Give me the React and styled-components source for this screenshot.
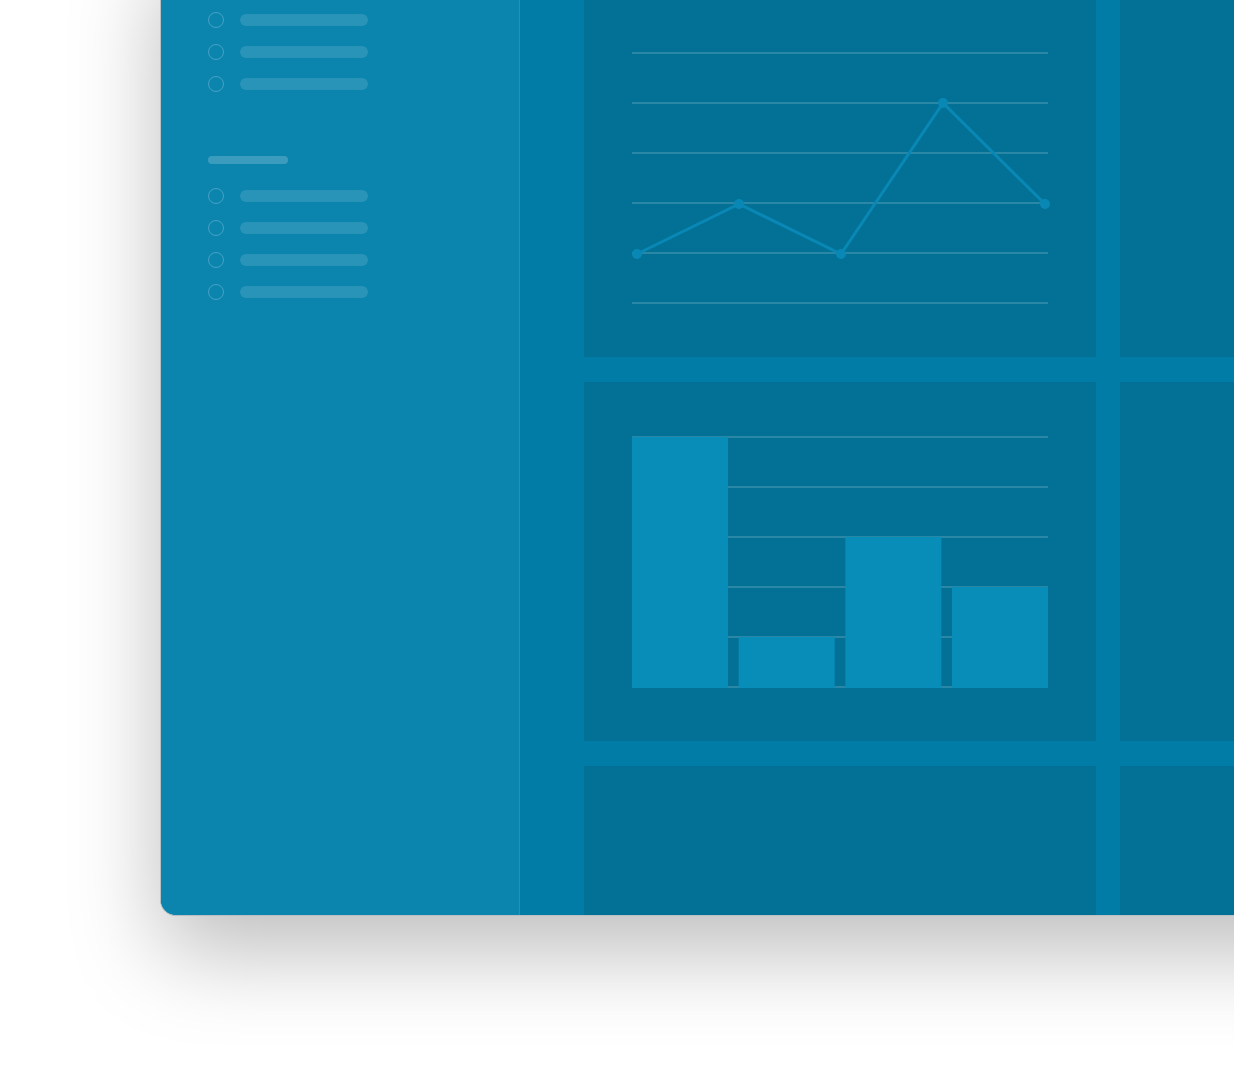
import styled, { createGlobalStyle } from "styled-components";

const GlobalStyle = createGlobalStyle`
  html, body {
    margin: 0;
    padding: 0;
    background: #ffffff;
    overflow: hidden;
    height: 1076px;
    font-family: "Liberation Sans", Arial, sans-serif;
  }
`;

const groups = [3, 4];

const linePoints = [
  [5, 202],
  [107, 152],
  [209, 202],
  [311, 51],
  [413, 152],
];

const bars = [250, 50, 150, 100];

const App = () => {
  return (
    <>
      <GlobalStyle />
      <Stage>
        <Window>
          <Sidebar>
            {groups.map((count, gi) => (
              <Group key={gi}>
                <GroupTitle />
                <ItemList>
                  {Array.from({ length: count }).map((_, i) => (
                    <Item key={i}>
                      <Radio />
                      <ItemLabel />
                    </Item>
                  ))}
                </ItemList>
              </Group>
            ))}
          </Sidebar>
          <Main>
            <PanelGrid>
              <Panel>
                <LineChart />
              </Panel>
              <Panel />
              <Panel>
                <BarChart />
              </Panel>
              <Panel />
              <Panel />
              <Panel />
            </PanelGrid>
          </Main>
        </Window>
      </Stage>
    </>
  );
};

const Grid = () =>
  [0, 1, 2, 3, 4, 5].map((i) => (
    <line
      key={i}
      x1="0"
      x2="416"
      y1={1 + i * 50}
      y2={1 + i * 50}
      stroke="rgba(255,255,255,0.16)"
      strokeWidth="2"
    />
  ));

const LineChart = () => (
  <ChartSvg width="416" height="254" viewBox="0 0 416 254">
    <Grid />
    <polyline
      points={linePoints.map((p) => p.join(",")).join(" ")}
      fill="none"
      stroke="#0a88b5"
      strokeWidth="3"
      strokeLinejoin="round"
    />
    {linePoints.map(([x, y], i) => (
      <circle key={i} cx={x} cy={y} r="5" fill="#0a88b5" />
    ))}
  </ChartSvg>
);

const BarChart = () => (
  <ChartSvg width="416" height="254" viewBox="0 0 416 254">
    <Grid />
    {bars.map((h, i) => (
      <rect
        key={i}
        x={i * (96 + 32 / 3)}
        y={251 - h}
        width="96"
        height={h + 1}
        fill="#088db9"
      />
    ))}
  </ChartSvg>
);

export default App;

const Stage = styled.div`
  padding-left: 160px;
  margin-top: -62px;
`;

const Window = styled.div`
  display: flex;
  width: 1500px;
  height: 977px;
  border: 1px solid #b8c0c4;
  border-top: none;
  border-right: none;
  border-radius: 0 0 0 16px;
  overflow: hidden;
  box-shadow: 0 36px 90px rgba(0, 0, 0, 0.26);
  background: #007ca7;
`;

const Sidebar = styled.aside`
  flex: 0 0 359px;
  box-sizing: border-box;
  padding: 42px 0 0 47px;
  background: #0b84ae;
  border-right: 1px solid rgba(255, 255, 255, 0.1);
  display: flex;
  flex-direction: column;
  gap: 56px;
`;

const Group = styled.section`
  display: flex;
  flex-direction: column;
  gap: 16px;
`;

const GroupTitle = styled.div`
  width: 80px;
  height: 8px;
  border-radius: 4px;
  background: rgba(255, 255, 255, 0.2);
`;

const ItemList = styled.ul`
  list-style: none;
  margin: 0;
  padding: 0;
`;

const Item = styled.li`
  display: flex;
  align-items: center;
  gap: 16px;
  height: 32px;
`;

const Radio = styled.span`
  box-sizing: border-box;
  width: 16px;
  height: 16px;
  border-radius: 50%;
  border: 1.5px solid rgba(255, 255, 255, 0.24);
`;

const ItemLabel = styled.span`
  width: 128px;
  height: 12px;
  border-radius: 6px;
  background: rgba(255, 255, 255, 0.13);
`;

const Main = styled.main`
  flex: 1;
  padding: 60px 0 0 64px;
`;

const PanelGrid = styled.div`
  display: grid;
  grid-template-columns: 512px 512px;
  grid-auto-rows: 359px;
  column-gap: 24px;
  row-gap: 25px;
`;

const Panel = styled.div`
  background: #037196;
  padding: 54px 48px 0;
`;

const ChartSvg = styled.svg`
  display: block;
  overflow: visible;
`;
